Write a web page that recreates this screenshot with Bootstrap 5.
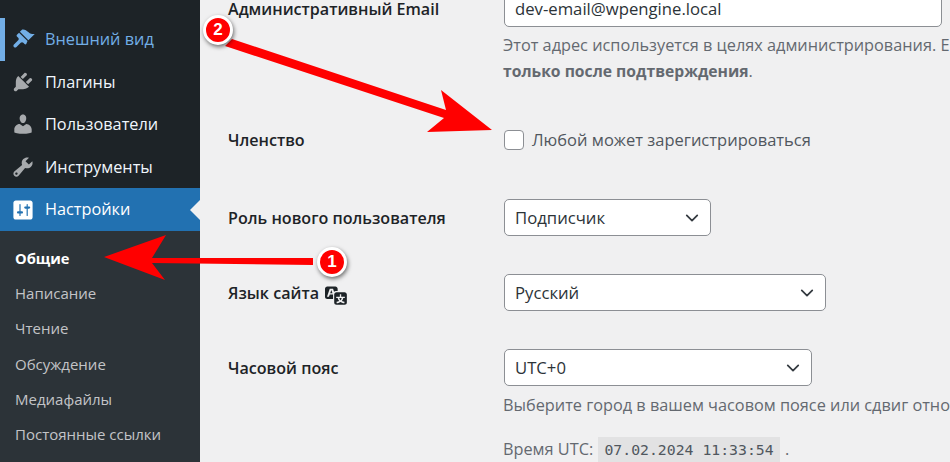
<!DOCTYPE html>
<html lang="ru">
<head>
<meta charset="utf-8">
<title>Общие настройки</title>
<link href="https://cdn.jsdelivr.net/npm/bootstrap@5.3.0/dist/css/bootstrap.min.css" rel="stylesheet">
<style>
html,body{height:462px;overflow:hidden}
body{background:#f0f0f1;font-family:"Open Sans","Noto Sans",sans-serif;font-size:16px;color:#1d2327;position:relative}
.wp-side{width:200px;height:462px;background:#1d2327;flex:none;padding-top:18px}
.wp-item{height:42.5px;color:#f0f6fc;font-size:16.3px;padding-left:11px;gap:10px}
.wp-item svg{width:24px;height:24px;fill:#a7aaad;flex:none}
.wp-item.cur-app{color:#72aee6;box-shadow:inset 5px 0 0 #72aee6}
.wp-item.cur-app svg{fill:#72aee6}
.wp-item.cur-set{background:#2271b1;color:#fff;position:relative;height:43px}
.wp-item.cur-set svg{fill:#fff}
.wp-item.cur-set::after{content:"";position:absolute;right:0;top:50%;margin-top:-10px;border:10px solid transparent;border-right-color:#f0f0f1;border-left:0}
.wp-sub{background:#2c3338;padding-top:10px;height:232px}
.wp-sub a{display:block;height:35.2px;line-height:35.2px;padding-left:15px;color:#c3c4c7;text-decoration:none;font-size:15px}
.wp-sub a.now{color:#fff;font-weight:700;font-size:14.7px}
.wp-main{flex:1;min-width:0;padding-left:28px;margin-top:-10px}
.wp-row{display:flex}
.wp-label{width:275px;flex:none;font-weight:600;font-size:16.1px;padding-top:2px}
.wp-label-top{line-height:18px;padding-top:10px}
.wp-label-mid{padding-top:0}
.wp-label-tz{padding-top:7px}
.wp-field{min-width:0;flex:1}
.wp-field .form-control,.wp-field .form-select{height:37px;border:1px solid #8c8f94;border-radius:5px;color:#2c3338;font-size:16.7px;padding:0 10px;margin-left:1px;box-shadow:none}
.wp-field .form-select{background-position:right 9px center;background-size:18px 14px;padding-right:30px}
.wp-w1{width:438px}.wp-w2{width:207px}.wp-w3{width:322px}.wp-w4{width:308px}
.wp-note{color:#646970;white-space:nowrap;line-height:26px;font-size:16.3px}
.wp-note b{font-size:15.7px}
.wp-note-dark{color:#50575e;font-size:16.5px}
.wp-gap-a{margin-top:5px}
.wp-gap-b{margin-top:6px}
.wp-gap-c{margin-top:18px}
.wp-gap-r1{margin-top:43px}
.wp-gap-r2{margin-top:46px}
.wp-gap-r3{margin-top:38px}
.wp-check{width:20px;height:20px;margin:0 0 0 1px;border:1px solid #8c8f94;border-radius:5px;flex:none}
.wp-code{background:#e2e2e3;font-family:"DejaVu Sans Mono",monospace;font-size:14.8px;padding:4px 6px;color:#50575e;margin:0 1px}
.wp-trans{width:23px;height:23px;fill:#1d2327;margin-left:6px;vertical-align:-7px}
.wp-arrows{position:absolute;left:0;top:0;width:950px;height:462px;pointer-events:none}
.wp-pin{position:absolute;width:30px;height:30px;border-radius:50%;background:#f00;border:3px solid #fff;box-shadow:1px 2px 4px rgba(0,0,0,.55);color:#fff;font-weight:700;font-size:17px;line-height:24px;text-align:center;font-family:"Liberation Sans",sans-serif}
.wp-pin1{left:317px;top:247px}
.wp-pin2{left:203px;top:15px}
</style>
</head>
<body>
<div class="d-flex">
  <nav class="wp-side">
    <div class="wp-item cur-app d-flex align-items-center"><svg viewBox="0 0 20 20"><path d="M14.48 11.06L7.41 3.99l1.5-1.5c.5-.56 2.3-.47 3.51.32 1.21.8 1.43 1.28 2.91 2.1 1.18.64 2.45 1.26 4.45.85zm-.71.71L6.7 4.7 4.93 6.47c-.39.39-.39 1.02 0 1.41l1.06 1.06c.59.59.59 1.54 0 2.12l-3.53 3.54c-.59.59-.59 1.54 0 2.12.59.59 1.54.59 2.12 0l3.54-3.53c.58-.59 1.53-.59 2.12 0l1.06 1.06c.39.39 1.02.39 1.41 0z"/></svg>Внешний вид</div>
    <div class="wp-item d-flex align-items-center"><svg viewBox="0 0 20 20"><path d="M13.11 4.36L9.87 7.6 8 5.73l3.24-3.24c.35-.34 1.05-.2 1.56.32.52.51.66 1.21.31 1.55zm-8 1.77l.91-1.12 9.01 9.01-1.19.84c-.71.71-2.63 1.16-3.82 1.16H6.14L4.9 17.26c-.59.59-1.54.59-2.12 0-.59-.58-.59-1.53 0-2.12l1.24-1.24v-3.88c0-1.13.4-3.19 1.09-3.89zm7.26 3.97l3.24-3.24c.34-.35 1.04-.21 1.55.31.52.51.66 1.21.31 1.55l-3.24 3.25z"/></svg>Плагины</div>
    <div class="wp-item d-flex align-items-center"><svg viewBox="0 0 20 20"><path d="M10 9.25c-2.27 0-2.73-3.44-2.73-3.44C7 4.02 7.82 2 9.97 2c2.16 0 2.98 2.02 2.71 3.81 0 0-.41 3.44-2.68 3.44zm0 2.57L12.72 10c2.39 0 4.52 2.33 4.52 4.53v2.49s-3.65 1.13-7.24 1.13c-3.65 0-7.24-1.13-7.24-1.13v-2.49c0-2.25 1.94-4.48 4.47-4.48z"/></svg>Пользователи</div>
    <div class="wp-item d-flex align-items-center"><svg viewBox="0 0 20 20"><path d="M16.68 9.77c-1.34 1.34-3.3 1.67-4.95.99l-5.41 6.52c-.99.99-2.59.99-3.58 0s-.99-2.59 0-3.57l6.52-5.42c-.68-1.65-.35-3.61.99-4.95 1.28-1.28 3.12-1.62 4.72-1.06l-2.89 2.89 2.82 2.82 2.86-2.87c.53 1.58.18 3.39-1.08 4.65zM3.81 16.21c.4.39 1.04.39 1.43 0 .4-.4.4-1.04 0-1.43-.39-.4-1.03-.4-1.43 0-.39.39-.39 1.03 0 1.43z"/></svg>Инструменты</div>
    <div class="wp-item cur-set d-flex align-items-center"><svg viewBox="0 0 20 20"><path d="M18 16V4c0-1.1-.9-2-2-2H4c-1.1 0-2 .9-2 2v12c0 1.1.9 2 2 2h12c1.1 0 2-.9 2-2zM8 11h1c.55 0 1 .45 1 1s-.45 1-1 1H8v1.5c0 .28-.22.5-.5.5s-.5-.22-.5-.5V13H6c-.55 0-1-.45-1-1s.45-1 1-1h1V5.5c0-.28.22-.5.5-.5s.5.22.5.5V11zm5-2h-1c-.55 0-1-.45-1-1s.45-1 1-1h1V5.5c0-.28.22-.5.5-.5s.5.22.5.5V7h1c.55 0 1 .45 1 1s-.45 1-1 1h-1v5.5c0 .28-.22.5-.5.5s-.5-.22-.5-.5V9z"/></svg>Настройки</div>
    <div class="wp-sub">
      <a class="now" href="#">Общие</a>
      <a href="#">Написание</a>
      <a href="#">Чтение</a>
      <a href="#">Обсуждение</a>
      <a href="#">Медиафайлы</a>
      <a href="#">Постоянные ссылки</a>
    </div>
  </nav>
  <main class="wp-main">
    <div class="wp-row">
      <div class="wp-label wp-label-top">Административный Email</div>
      <div class="wp-field">
        <input class="form-control wp-w1" value="dev-email@wpengine.local">
        <div class="wp-note wp-gap-a">Этот адрес используется в целях администрирования. Е<br><b>только после подтверждения</b>.</div>
      </div>
    </div>
    <div class="wp-row align-items-center wp-gap-r1">
      <div class="wp-label wp-label-mid">Членство</div>
      <div class="wp-field d-flex align-items-center gap-2">
        <input class="form-check-input wp-check" type="checkbox" id="wpAny">
        <label class="wp-note wp-note-dark" for="wpAny">Любой может зарегистрироваться</label>
      </div>
    </div>
    <div class="wp-row align-items-center wp-gap-r2">
      <div class="wp-label">Роль нового пользователя</div>
      <div class="wp-field"><select class="form-select wp-w2"><option>Подписчик</option></select></div>
    </div>
    <div class="wp-row align-items-center wp-gap-r3">
      <div class="wp-label">Язык сайта<svg class="wp-trans" viewBox="0 0 20 20"><path d="M11 7H9.49c-.63 0-1.25.3-1.59.7L7 5H4.13l-2.39 7h1.69l.74-2H7v4H2c-1.1 0-2-.9-2-2V5c0-1.1.9-2 2-2h7c1.1 0 2 .9 2 2v2zM6.51 9H4.49l1-2.93zM10 8h7c1.1 0 2 .9 2 2v7c0 1.1-.9 2-2 2h-7c-1.1 0-2-.9-2-2v-7c0-1.1.9-2 2-2zm7.25 5v-1.08h-3.17V9.75h-1.16v2.17H9.75V13h1.28c.11.85.56 1.85 1.28 2.62-.87.36-1.89.62-2.31.62-.01.02.22.97.2 1.46.84 0 2.21-.5 3.28-1.15 1.09.65 2.48 1.15 3.34 1.15-.02-.49.2-1.44.2-1.46-.43 0-1.49-.27-2.38-.63.7-.77 1.14-1.77 1.25-2.61h1.06zm-3.81 1.93c-.5-.46-.85-1.13-1.01-1.93h2.09c-.17.8-.51 1.47-1 1.93l-.04.03s-.03-.02-.04-.03z"/></svg></div>
      <div class="wp-field"><select class="form-select wp-w3"><option>Русский</option></select></div>
    </div>
    <div class="wp-row wp-gap-r3">
      <div class="wp-label wp-label-tz">Часовой пояс</div>
      <div class="wp-field">
        <select class="form-select wp-w4"><option>UTC+0</option></select>
        <div class="wp-note wp-gap-b">Выберите город в вашем часовом поясе или сдвиг отно</div>
        <div class="wp-note wp-gap-c">Время UTC: <code class="wp-code">07.02.2024 11:33:54</code> .</div>
      </div>
    </div>
  </main>
</div>
<svg class="wp-arrows" viewBox="0 0 950 462">
  <polygon fill="#f00" points="104,257 166,235 152,258 313,258 313,265 152,263 165,280"/>
  <polygon fill="#f00" points="492,130 441,90 446,110 232,39 225,46 444,118 427,132"/>
</svg>
<div class="wp-pin wp-pin1">1</div>
<div class="wp-pin wp-pin2">2</div>
<script src="https://cdn.jsdelivr.net/npm/bootstrap@5.3.0/dist/js/bootstrap.bundle.min.js"></script>
</body>
</html>
